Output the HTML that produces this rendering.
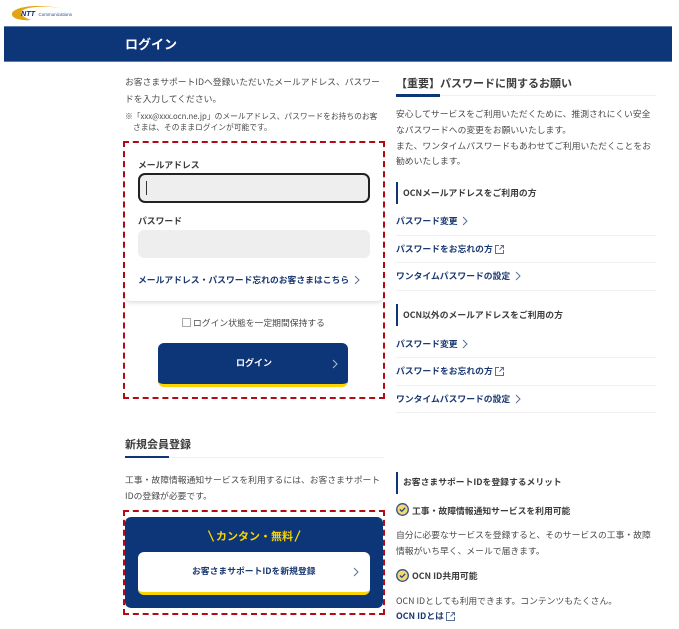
<!DOCTYPE html>
<html lang="ja"><head><meta charset="utf-8"><title>ログイン</title>
<style>
*{box-sizing:border-box}
html,body{margin:0;padding:0;background:#fff}
body{width:679px;height:629px;position:relative;overflow:hidden;font-family:"Liberation Sans","Noto Sans CJK JP",sans-serif;color:#444;}
.t{position:absolute;white-space:nowrap;font-family:"Noto Sans CJK JP",sans-serif;line-height:16px;height:16px;font-size:8.8px;color:#4a4a4a}
.b{font-weight:700}
.l{color:#1c3a72;font-weight:700;font-size:8.8px}
.h{font-weight:700;color:#3c3c3c}
.r{position:absolute}
.line{position:absolute;height:1px;background:#f0f0f0}
.bar{position:absolute;width:2px;height:22px;background:#0d3679}
svg{position:absolute;overflow:visible}
</style></head><body>

<!-- logo -->
<svg style="left:0;top:0" width="70" height="24" viewBox="0 0 70 24"><path d="M12 13.500C13 8.500 30 2.500 63 8.500C46 5.500 29 6.500 23 10C19 13 22 17 31 20C20 21 11 18 12 13.500Z" fill="#e3a512"/></svg>
<div class="r" style="left:21px;top:11px;font:italic 700 7.200px/6px 'Liberation Sans',sans-serif;color:#0f2a6e;white-space:nowrap">NTT</div>
<div class="r" style="left:38.500px;top:11.500px;font:400 4.500px/6px 'Liberation Sans',sans-serif;color:#2f4f88;white-space:nowrap">Communications</div>

<!-- header -->
<div class="r" style="left:4px;top:26px;width:668px;height:36px;background:#0d3679;border-top:1px solid #5a7aa8;border-bottom:1px solid #5a7aa8"></div>
<div class="t b" style="left:125px;top:36px;font-size:13px;color:#fff">ログイン</div>

<!-- left intro -->
<div class="t" style="left:125px;top:74px">お客さまサポートIDへ登録いただいたメールアドレス、パスワー</div>
<div class="t" style="left:125px;top:91px">ドを入力してください。</div>
<div class="t" style="left:125px;top:109px;font-size:7.750px">※「xxx@xxx.ocn.ne.jp」のメールアドレス、パスワードをお持ちのお客</div>
<div class="t" style="left:133px;top:120px;font-size:7.750px">さまは、そのままログインが可能です。</div>

<!-- red dashed login -->
<div class="r" style="left:123px;top:141px;width:262px;height:258px;border:2px dashed #b40a14"></div>
<div class="r" style="left:125px;top:143px;width:258px;height:158px;border-radius:0 0 6px 6px;background:#fff;box-shadow:0 2px 4px rgba(0,0,0,.13)"></div>
<div class="t b" style="left:138px;top:157px;color:#3c3c3c">メールアドレス</div>
<div class="r" style="left:138px;top:173px;width:232px;height:30px;background:#eee;border:2px solid #222;border-radius:7px"></div>
<div class="r" style="left:146px;top:181px;width:1px;height:14px;background:#333"></div>
<div class="t b" style="left:138px;top:213px;color:#3c3c3c">パスワード</div>
<div class="r" style="left:138px;top:230px;width:232px;height:28px;background:#eee;border-radius:6px"></div>
<div class="t l" style="left:138px;top:272px">メールアドレス・パスワード忘れのお客さまはこちら</div>
<svg style="left:354px;top:275px" width="6" height="10"><path d="M1 1L5 5L1 9" fill="none" stroke="#5a7099" stroke-width="1"/></svg>
<div class="r" style="left:182px;top:318px;width:9px;height:9px;border:1px solid #aaa;background:#fff"></div>
<div class="t" style="left:193px;top:315px">ログイン状態を一定期間保持する</div>
<div class="r" style="left:158px;top:343px;width:190px;height:44px;background:#0d3679;border-bottom:3px solid #fbd400;border-radius:6px"></div>
<div class="t b" style="left:236px;top:355px;font-size:9px;color:#fff">ログイン</div>
<svg style="left:332px;top:359px" width="6" height="10"><path d="M1 1L5 5L1 9" fill="none" stroke="#b0bdd4" stroke-width="1"/></svg>

<!-- right top -->
<div class="t h" style="left:396px;top:75px;font-size:11px">【重要】パスワードに関するお願い</div>
<div class="line" style="left:396px;top:95px;width:260px"></div>
<div class="r" style="left:396px;top:94px;width:44px;height:2.500px;background:#0d3679"></div>
<div class="t" style="left:396px;top:106px">安心してサービスをご利用いただくために、推測されにくい安全</div>
<div class="t" style="left:396px;top:122px">なパスワードへの変更をお願いいたします。</div>
<div class="t" style="left:396px;top:138px">また、ワンタイムパスワードもあわせてご利用いただくことをお</div>
<div class="t" style="left:396px;top:153px">勧めいたします。</div>

<div class="bar" style="left:396px;top:182px"></div>
<div class="t h" style="left:403px;top:185px">OCNメールアドレスをご利用の方</div>
<div class="t l" style="left:396px;top:213px">パスワード変更</div>
<svg style="left:462px;top:216px" width="6" height="10"><path d="M1 1L5 5L1 9" fill="none" stroke="#5a7099"/></svg>
<div class="line" style="left:396px;top:235px;width:260px"></div>
<div class="t l" style="left:396px;top:241px">パスワードをお忘れの方</div>
<svg style="left:495px;top:245px" width="10" height="9" fill="none" stroke="#5a7099"><path d="M8.500 5V8.500H.5V.5H4M5.500 .5H8.500V3.500M8.500 .5L4.500 4.500"/></svg>
<div class="line" style="left:396px;top:262px;width:260px"></div>
<div class="t l" style="left:396px;top:268px">ワンタイムパスワードの設定</div>
<svg style="left:515px;top:271px" width="6" height="10"><path d="M1 1L5 5L1 9" fill="none" stroke="#5a7099"/></svg>
<div class="line" style="left:396px;top:290px;width:260px"></div>

<div class="bar" style="left:396px;top:304px"></div>
<div class="t h" style="left:403px;top:307px">OCN以外のメールアドレスをご利用の方</div>
<div class="t l" style="left:396px;top:336px">パスワード変更</div>
<svg style="left:462px;top:339px" width="6" height="10"><path d="M1 1L5 5L1 9" fill="none" stroke="#5a7099"/></svg>
<div class="line" style="left:396px;top:357px;width:260px"></div>
<div class="t l" style="left:396px;top:363px">パスワードをお忘れの方</div>
<svg style="left:495px;top:367px" width="10" height="9" fill="none" stroke="#5a7099"><path d="M8.500 5V8.500H.5V.5H4M5.500 .5H8.500V3.500M8.500 .5L4.500 4.500"/></svg>
<div class="line" style="left:396px;top:385px;width:260px"></div>
<div class="t l" style="left:396px;top:391px">ワンタイムパスワードの設定</div>
<svg style="left:515px;top:394px" width="6" height="10"><path d="M1 1L5 5L1 9" fill="none" stroke="#5a7099"/></svg>
<div class="line" style="left:396px;top:412px;width:260px"></div>

<!-- new member -->
<div class="t h" style="left:125px;top:436px;font-size:11px">新規会員登録</div>
<div class="line" style="left:125px;top:457px;width:259px"></div>
<div class="r" style="left:125px;top:456px;width:44px;height:2px;background:#0d3679"></div>
<div class="t" style="left:125px;top:472px">工事・故障情報通知サービスを利用するには、お客さまサポート</div>
<div class="t" style="left:125px;top:488px">IDの登録が必要です。</div>

<div class="r" style="left:123px;top:509.500px;width:262px;height:105px;border:2px dashed #b40a14"></div>
<div class="r" style="left:125px;top:517px;width:258px;height:91px;background:#0d3679;border-radius:6px"></div>
<svg style="left:207px;top:530px" width="96" height="13" fill="none" stroke="#fbd400" stroke-width="1.300"><path d="M1.500 .5L6.500 11.500M93 .5L88 11.500"/></svg>
<div class="t b" style="left:216px;top:528px;font-size:11px;color:#fbd400">カンタン・無料</div>
<div class="r" style="left:138px;top:552px;width:232px;height:43px;background:#fff;border-bottom:3px solid #fbd400;border-radius:6px"></div>
<div class="t b" style="left:192px;top:563px;color:#1c3a72">お客さまサポートIDを新規登録</div>
<svg style="left:353px;top:567px" width="6" height="10"><path d="M1 1L5 5L1 9" fill="none" stroke="#5a7099"/></svg>

<!-- merits -->
<div class="bar" style="left:396px;top:472px"></div>
<div class="t h" style="left:403px;top:474px">お客さまサポートIDを登録するメリット</div>
<svg style="left:396px;top:503px" width="13" height="13"><circle cx="6.500" cy="6.500" r="5.800" fill="#f4d872" stroke="#33518a" stroke-width="1.300"/><path d="M3.800 6.500L5.800 8.300L9.200 4.800" fill="none" stroke="#1f3f78" stroke-width="1.200"/></svg>
<div class="t h" style="left:412px;top:503px">工事・故障情報通知サービスを利用可能</div>
<div class="t" style="left:396px;top:527px">自分に必要なサービスを登録すると、そのサービスの工事・故障</div>
<div class="t" style="left:396px;top:543px">情報がいち早く、メールで届きます。</div>
<svg style="left:396px;top:569px" width="13" height="13"><circle cx="6.500" cy="6.500" r="5.800" fill="#f4d872" stroke="#33518a" stroke-width="1.300"/><path d="M3.800 6.500L5.800 8.300L9.200 4.800" fill="none" stroke="#1f3f78" stroke-width="1.200"/></svg>
<div class="t h" style="left:412px;top:568px">OCN ID共用可能</div>
<div class="t" style="left:396px;top:593px">OCN IDとしても利用できます。コンテンツもたくさん。</div>
<div class="t l" style="left:396px;top:608px">OCN IDとは</div>
<svg style="left:446px;top:612px" width="10" height="9" fill="none" stroke="#5a7099"><path d="M8.500 5V8.500H.5V.5H4M5.500 .5H8.500V3.500M8.500 .5L4.500 4.500"/></svg>
</body></html>
